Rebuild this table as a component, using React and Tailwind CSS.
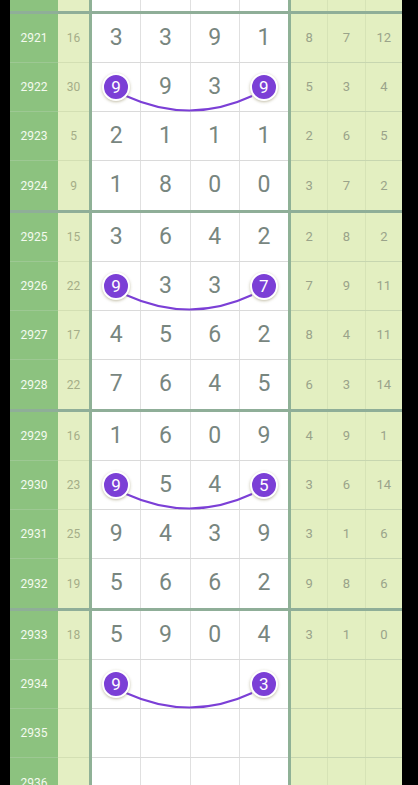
import React from 'react';

const rows = [
  { no: 2921, sum: 16, d: [3, 3, 9, 1], r: [8, 7, 12] },
  { no: 2922, sum: 30, d: [9, 9, 3, 9], r: [5, 3, 4], mark: true },
  { no: 2923, sum: 5, d: [2, 1, 1, 1], r: [2, 6, 5] },
  { no: 2924, sum: 9, d: [1, 8, 0, 0], r: [3, 7, 2] },
  { no: 2925, sum: 15, d: [3, 6, 4, 2], r: [2, 8, 2] },
  { no: 2926, sum: 22, d: [9, 3, 3, 7], r: [7, 9, 11], mark: true },
  { no: 2927, sum: 17, d: [4, 5, 6, 2], r: [8, 4, 11] },
  { no: 2928, sum: 22, d: [7, 6, 4, 5], r: [6, 3, 14] },
  { no: 2929, sum: 16, d: [1, 6, 0, 9], r: [4, 9, 1] },
  { no: 2930, sum: 23, d: [9, 5, 4, 5], r: [3, 6, 14], mark: true },
  { no: 2931, sum: 25, d: [9, 4, 3, 9], r: [3, 1, 6] },
  { no: 2932, sum: 19, d: [5, 6, 6, 2], r: [9, 8, 6] },
  { no: 2933, sum: 18, d: [5, 9, 0, 4], r: [3, 1, 0] },
  { no: 2934, sum: '', d: [9, '', '', 3], r: ['', '', ''], mark: true },
  { no: 2935, sum: '', d: ['', '', '', ''], r: ['', '', ''] },
  { no: 2936, sum: '', d: ['', '', '', ''], r: ['', '', ''] },
];

const font = { fontFamily: 'Roboto, "Noto Sans", sans-serif' };

function Badge({ value }) {
  return (
    <div className="relative z-10 flex h-[28px] w-[28px] items-center justify-center rounded-full border-2 border-white bg-[#7b3fd6] text-[17px] leading-none text-white shadow-[0_1px_3px_rgba(120,110,60,0.45)]">
      {value}
    </div>
  );
}

function Row({ row, last }) {
  const line = last ? '' : 'border-b border-[#dadada]';
  return (
    <div className="flex h-[49px]">
      <div className={`flex w-[48px] items-center justify-center bg-[#8cc27f] text-[12px] text-[#f4faef] ${last ? '' : 'border-b border-[#9dc893]'}`}>
        {row.no}
      </div>
      <div className={`flex w-[31px] items-center justify-center bg-[#e4efc3] text-[12px] text-[#a4ad88] ${last ? '' : 'border-b border-[#d3dfb3]'}`}>
        {row.sum}
      </div>
      <div className="w-[3px] bg-[#8fb196]" />
      <div className={`relative flex w-[196px] bg-white ${line}`}>
        {row.d.map((v, i) => (
          <div
            key={i}
            className={`flex flex-1 items-center justify-center text-[23px] text-[#78867f] ${i < 3 ? 'border-r border-[#e0e0e0]' : ''}`}
          >
            {row.mark && (i === 0 || i === 3) ? <Badge value={v} /> : v}
          </div>
        ))}
        {row.mark && (
          <svg className="pointer-events-none absolute left-0 top-0" width="196" height="49">
            <path d="M34 33 Q98 62 160 33" fill="none" stroke="#7b3fd6" strokeWidth="2" />
          </svg>
        )}
      </div>
      <div className="w-[3px] bg-[#8fb196]" />
      <div className={`flex w-[111px] bg-[#e3efc1] ${last ? '' : 'border-b border-[#c7d6b0]'}`}>
        {row.r.map((v, i) => (
          <div
            key={i}
            className={`flex flex-1 items-center justify-center text-[13px] text-[#9aa38a] ${i < 2 ? 'border-r border-[#d6e3b6]' : ''}`}
          >
            {v}
          </div>
        ))}
      </div>
    </div>
  );
}

function Group({ items }) {
  return (
    <div className="border-b-[3px] border-[#8fae98]">
      {items.map((row, i) => (
        <Row key={row.no} row={row} last={i === items.length - 1} />
      ))}
    </div>
  );
}

export default function App() {
  const groups = [];
  for (let i = 0; i < rows.length; i += 4) groups.push(rows.slice(i, i + 4));

  return (
    <div className="flex h-[785px] w-[418px] overflow-hidden bg-black" style={font}>
      <div className="ml-[10px] w-[392px]">
        {/* tail of the previous block */}
        <div className="flex h-[14px] border-b-[3px] border-[#8fae98]">
          <div className="w-[48px] bg-[#8cc27f]" />
          <div className="w-[31px] bg-[#e4efc3]" />
          <div className="w-[3px] bg-[#8fb196]" />
          <div className="flex w-[196px] bg-white">
            <div className="flex-1 border-r border-[#e0e0e0]" />
            <div className="flex-1 border-r border-[#e0e0e0]" />
            <div className="flex-1 border-r border-[#e0e0e0]" />
            <div className="flex-1" />
          </div>
          <div className="w-[3px] bg-[#8fb196]" />
          <div className="flex w-[111px] bg-[#e3efc1]">
            <div className="flex-1 border-r border-[#d6e3b6]" />
            <div className="flex-1 border-r border-[#d6e3b6]" />
            <div className="flex-1" />
          </div>
        </div>
        {groups.map((g, i) => (
          <Group key={i} items={g} />
        ))}
      </div>
    </div>
  );
}
